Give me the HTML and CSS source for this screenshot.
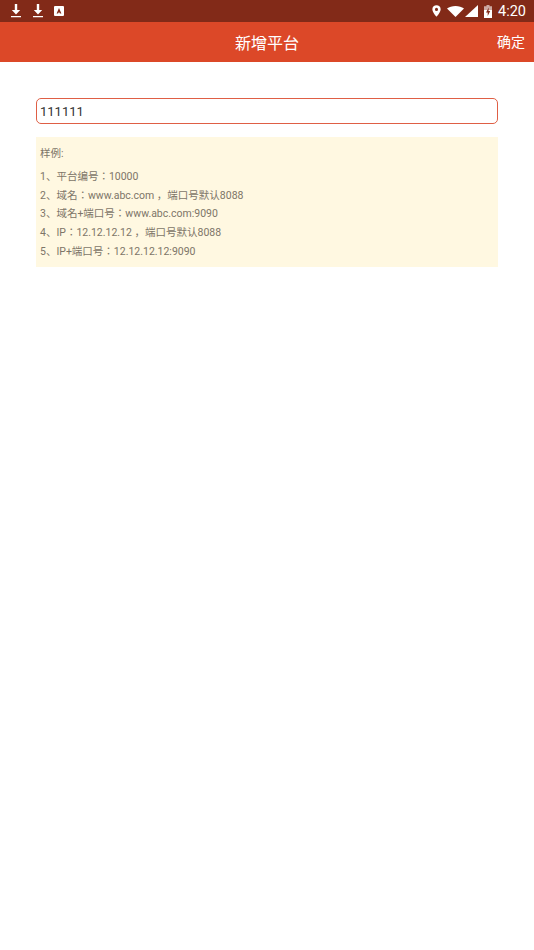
FILE: index.html
```html
<!DOCTYPE html>
<html>
<head>
<meta charset="UTF-8" />
<meta name="viewport" content="width=device-width, initial-scale=1" />
<title>新增平台</title>
<link rel="stylesheet" href="styles.css">
</head>
<body>

<div class="status-bar">
  <div class="status-left">
    <svg width="14" height="14" viewBox="0 0 14 14"><path d="M5.8 0h2.4v6h3L7 10.4 2.8 6h3z M2 12h10v1.3H2z" fill="#fff"/></svg>
    <svg width="14" height="14" viewBox="0 0 14 14"><path d="M5.8 0h2.4v6h3L7 10.4 2.8 6h3z M2 12h10v1.3H2z" fill="#fff"/></svg>
    <svg width="12" height="12" viewBox="0 0 12 12"><path fill-rule="evenodd" d="M2 1h8a1 1 0 0 1 1 1v8a1 1 0 0 1-1 1H2a1 1 0 0 1-1-1V2a1 1 0 0 1 1-1z M6 3L3.6 8.6h1.5l.4-1h1l.4 1h1.5z" fill="#fff"/></svg>
  </div>
  <div class="status-right">
    <svg class="pin" width="9" height="12" viewBox="0 0 10 13"><path fill-rule="evenodd" d="M5 0a4.6 4.6 0 0 1 4.6 4.6C9.6 8 5 13 5 13S.4 8 .4 4.6A4.6 4.6 0 0 1 5 0z M5 3a1.7 1.7 0 1 0 0 3.4A1.7 1.7 0 0 0 5 3z" fill="#fff"/></svg>
    <svg class="wifi" width="17" height="11" viewBox="0 0 17 11"><path d="M0 2.4C2.2.9 5.2 0 8.5 0s6.300.9 8.500 2.400L8.500 11z" fill="#fff"/></svg>
    <svg class="signal" width="13" height="12" viewBox="0 0 13 12"><path d="M13 0v12H0z" fill="#fff"/></svg>
    <svg class="battery" width="8" height="13" viewBox="0 0 8 13"><path d="M2.500 0h3v1.200H8V5H0V1.200h2.500z" fill="#fff" opacity="0.6"/><path d="M0 5h8v8H0z" fill="#fff"/><path d="M4.800 2.500L2 7.500h1.700V11L6.200 6H4.500z" fill="#822a18"/></svg>
    <span class="clock">4:20</span>
  </div>
</div>

<header class="title-bar">
  <h1 class="title">新增平台</h1>
  <a class="confirm">确定</a>
</header>

<main class="content">
  <input class="platform-input" type="text" value="111111" />
  <div class="hint">
    <p class="hint-title">样例:</p>
    <p class="hint-row">1、平台编号：10000</p>
    <p class="hint-row">2、域名：www.abc.com ，端口号默认8088</p>
    <p class="hint-row">3、域名+端口号：www.abc.com:9090</p>
    <p class="hint-row">4、IP：12.12.12.12 ，端口号默认8088</p>
    <p class="hint-row">5、IP+端口号：12.12.12.12:9090</p>
  </div>
</main>

</body>
</html>
```

FILE: styles.css
```css
* {
  box-sizing: border-box;
}
body {
  margin: 0;
  background: #fff;
  font-family: Roboto, "Noto Sans CJK JP", sans-serif;
}
.status-bar {
  height: 22px;
  background: #822a18;
  display: flex;
  justify-content: space-between;
  align-items: center;
  padding: 0 8px 0 9px;
}
.status-left {
  display: flex;
  align-items: center;
  gap: 8px;
}
.status-right {
  display: flex;
  align-items: center;
}
.wifi {
  margin-left: 6px;
}
.signal {
  margin-left: 1px;
}
.battery {
  margin-left: 6px;
}
.clock {
  color: #fff;
  font-size: 14.5px;
  margin-left: 6px;
}
.title-bar {
  height: 40px;
  background: #dc4828;
  display: flex;
  justify-content: center;
  align-items: center;
  position: relative;
}
.title {
  margin: 0;
  color: #fff;
  font-size: 16px;
  font-weight: 400;
}
.confirm {
  position: absolute;
  right: 9px;
  top: 11px;
  color: #fff;
  font-size: 14px;
  line-height: 18px;
}
.content {
  padding: 36px 36px 0;
}
.platform-input {
  display: block;
  width: 100%;
  height: 26px;
  padding: 0 3px;
  border: 1px solid #df5f45;
  border-radius: 5px;
  outline: none;
  color: #333;
  font-family: inherit;
  font-size: 13px;
}
.hint {
  margin-top: 13px;
  height: 130px;
  padding: 9px 4px 0;
  background: #fff8e1;
  color: #7d7568;
  font-size: 10.5px;
}
.hint-title {
  margin: 0 0 6px;
  line-height: 16px;
}
.hint-row {
  margin: 0;
  line-height: 18.7px;
}
```
